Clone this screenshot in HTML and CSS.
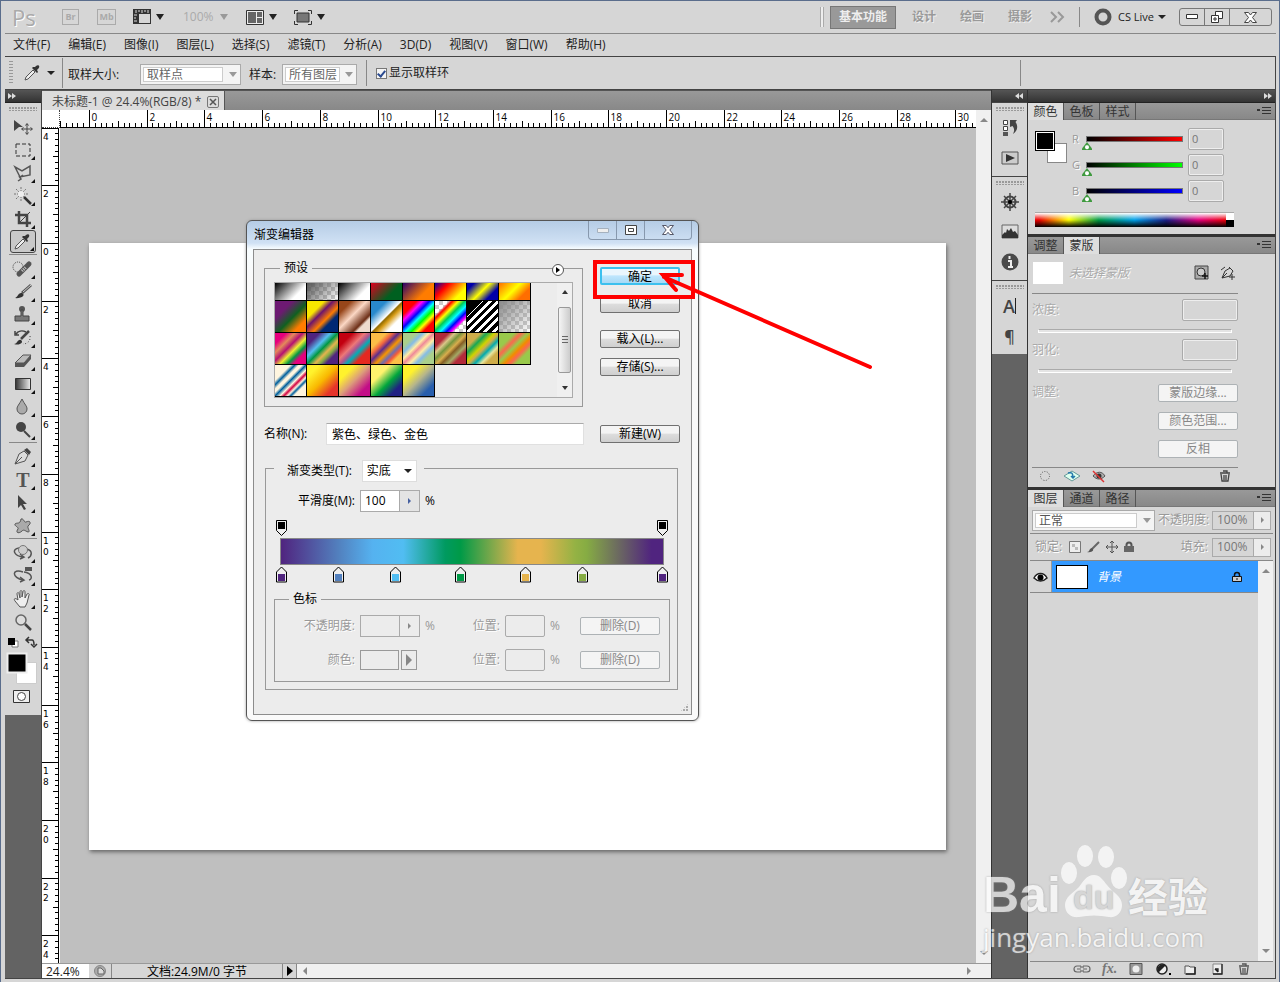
FILE: index.html
```html
<!DOCTYPE html>
<html lang="zh-CN">
<head>
  <meta charset="utf-8">
  <title>未标题-1</title>
  <link rel="stylesheet" href="styles.css">
</head>
<body>
  <div class="window">
    <header class="app-bar">
      <span class="ps-logo">Ps</span>
      <span class="mini-app br">Br</span>
      <span class="mini-app mb">Mb</span>
      <svg class="view-icon" width="18" height="16" viewBox="0 0 18 16"><path d="M0 0h18v15H0z" fill="#333"/><path d="M6 5h11v9H6z" fill="#d6d6d6"/><path d="M3 1v3M6 1v2M9 1v3M12 1v2M15 1v3M1 6h3M1 9h2M1 12h3" stroke="#ddd"/></svg>
      <i class="caret"></i>
      <span class="zoom-value">100%</span>
      <i class="caret pale"></i>
      <svg class="arrange-icon" width="18" height="15" viewBox="0 0 18 15"><path d="M.5.5h17v14H.5z" fill="#eee" stroke="#333"/><path d="M2 2h8v11H2zM11 2h5v5h-5zM11 8h5v5h-5z" fill="#666"/></svg>
      <i class="caret"></i>
      <svg class="screen-icon" width="18" height="15" viewBox="0 0 18 15"><path d="M.5 4V.5H4M14 .5h3.500V4M17.500 11v3.500H14M4 14.500H.5V11" fill="none" stroke="#333"/><path d="M3 3h12v9H3z" fill="#777" stroke="#333"/></svg>
      <i class="caret"></i>
      <div class="workspaces">
        <i class="double-line"></i>
        <button class="workspace active">基本功能</button>
        <button class="workspace">设计</button>
        <button class="workspace">绘画</button>
        <button class="workspace">摄影</button>
        <svg class="more" width="16" height="12" viewBox="0 0 16 12"><path d="M1 1l5 5-5 5M8 1l5 5-5 5" fill="none" stroke="#999" stroke-width="2"/></svg>
        <i class="divider"></i>
        <svg class="cs-ring" width="18" height="18" viewBox="0 0 18 18"><circle cx="9" cy="9" r="6.500" fill="none" stroke="#555" stroke-width="4"/></svg>
        <span class="cs-live">CS Live</span>
        <i class="caret small"></i>
        <div class="win-buttons">
          <button aria-label="最小化"><svg width="12" height="6" viewBox="0 0 12 6"><path d="M.5.5h11v4H.5z" fill="#fff" stroke="#333"/></svg></button>
          <button aria-label="还原"><svg width="12" height="12" viewBox="0 0 12 12"><path d="M4.500.5h7v7h-7z" fill="#fff" stroke="#333"/><path d="M.5 4.500h7v7h-7zM3 7h2v2H3z" fill="#fff" stroke="#333"/></svg></button>
          <button class="wide" aria-label="关闭"><svg width="13" height="11" viewBox="0 0 13 11"><path d="M.5.5h4l2 2.500 2-2.500h4l-4 5 4 5h-4l-2-2.500-2 2.500h-4l4-5z" fill="#fff" stroke="#444"/></svg></button>
        </div>
      </div>
    </header>

    <nav class="menu">
      <a href="#">文件(F)</a><a href="#">编辑(E)</a><a href="#">图像(I)</a><a href="#">图层(L)</a><a href="#">选择(S)</a><a href="#">滤镜(T)</a><a href="#">分析(A)</a><a href="#">3D(D)</a><a href="#">视图(V)</a><a href="#">窗口(W)</a><a href="#">帮助(H)</a>
    </nav>

    <div class="options">
      <i class="grip-v"></i>
      <svg class="dropper" width="18" height="18" viewBox="0 0 18 18"><path d="M2 16l1-3 7-7 2 2-7 7z" fill="#eee" stroke="#555"/><path d="M9 4l5 5 1-1-1-2c4-3 2-6-1-4l-1 1-2 0z" fill="#333"/></svg>
      <i class="caret small"></i>
      <i class="option-line"></i>
      <div class="option-fields">
        <label class="size-label" for="size">取样大小:</label>
        <span class="combo size"><select id="size"><option>取样点</option></select><i class="caret pale"></i></span>
        <label class="sample-label" for="sample">样本:</label>
        <span class="combo sample"><select id="sample"><option>所有图层</option></select><i class="caret pale"></i></span>
      </div>
      <i class="option-line short"></i>
      <input class="ring-check" type="checkbox" id="ring" checked>
      <label for="ring">显示取样环</label>
      <i class="option-line far"></i>
    </div>

    <div class="workspace-area">
      <aside class="tools">
        <div class="dark-head"><svg width="8" height="6" viewBox="0 0 8 6"><path d="M0 0l4 3-4 3zM4 0l4 3-4 3z" fill="#ddd"/></svg></div>
        <div class="tool-box">
          <i class="grip"></i>
          <button class="tool plain" aria-label="移动"><svg viewBox="0 0 22 20"><path d="M2 3l9 7-4 0-5 4z" fill="#444"/><path d="M15 7v10M10 12h10M13.500 8.500l1.500-2 1.500 2M13.500 15.500l1.500 2 1.500-2M11.500 10.500l-2 1.500 2 1.500M18.500 10.500l2 1.500-2 1.500" fill="none" stroke="#444"/></svg></button>
          <button class="tool" aria-label="选框"><svg viewBox="0 0 22 20"><path d="M4 4h14v12H4z" fill="none" stroke="#333" stroke-dasharray="4 2"/></svg></button>
          <button class="tool" aria-label="套索"><svg viewBox="0 0 22 20"><path d="M3 4l7 4 8-5v9l-10 2zM8 14l3-2M7 13l2 3-3 2" fill="none" stroke="#555" stroke-width="1.500"/></svg></button>
          <button class="tool" aria-label="魔棒"><svg viewBox="0 0 22 20"><path d="M9 1v15M2 8h14M4 3l10 10M4 13L14 3" stroke="#777" stroke-dasharray="2 1"/><circle cx="9" cy="8" r="3" fill="#eee"/><path d="M12 11l7 7" stroke="#333" stroke-width="2.500"/></svg></button>
          <button class="tool" aria-label="裁剪"><svg viewBox="0 0 22 20"><path d="M7 2v12h12M3 6h12v12" fill="none" stroke="#444" stroke-width="2.500"/><path d="M7 14L18 3" stroke="#444"/></svg></button>
          <button class="tool selected" aria-label="吸管"><svg viewBox="0 0 22 20"><path d="M3 17l1-3 7-7 2 2-7 7z" fill="#eee" stroke="#555"/><path d="M10 5l5 5 1-1-1-2c4-3 2-6-1-4l-1 1-2 0z" fill="#333"/></svg></button>
          <i class="tool-line"></i>
          <button class="tool" aria-label="修复画笔"><svg viewBox="0 0 22 20"><circle cx="6" cy="8" r="5" fill="none" stroke="#444" stroke-dasharray="1 1"/><path d="M7 15L17 5" stroke="#555" stroke-width="5" stroke-linecap="round"/><path d="M10 12l4-4" stroke="#ccc" stroke-width="3" stroke-dasharray="1 1"/></svg></button>
          <button class="tool" aria-label="画笔"><svg viewBox="0 0 22 20"><path d="M10 11l9-8" stroke="#555" stroke-width="3"/><path d="M11 10l8-7" stroke="#ccc"/><path d="M2 16c4 0 4-6 8-5 4 2 0 6-8 5z" fill="#333"/></svg></button>
          <button class="tool" aria-label="图章"><svg viewBox="0 0 22 20"><circle cx="10" cy="4" r="3" fill="#555"/><path d="M9 5h2v6h6v5H3v-5h6z" fill="#777" stroke="#444"/></svg></button>
          <button class="tool" aria-label="历史画笔"><svg viewBox="0 0 22 20"><path d="M4 6c2-3 6-4 10-2M3 3v4h4" fill="none" stroke="#444" stroke-width="1.500"/><path d="M9 11l8-8" stroke="#444" stroke-width="2.500"/><path d="M2 16c4 0 3-5 7-4 3 2-1 6-7 4z" fill="#333"/><path d="M18 8c1 5-3 8-7 8" fill="none" stroke="#444" stroke-dasharray="1 2"/></svg></button>
          <button class="tool" aria-label="橡皮擦"><svg viewBox="0 0 22 20"><path d="M3 12l8-8h8l-7 8z" fill="#bbb" stroke="#555"/><path d="M3 12h9v4H3zM12 12l7-8v4l-7 8z" fill="#555"/></svg></button>
          <button class="tool" aria-label="渐变"><svg viewBox="0 0 22 20"><defs><linearGradient id="tg"><stop stop-color="#333"/><stop offset="1" stop-color="#eee"/></linearGradient></defs><path d="M3.500 4.500h15v11h-15z" fill="url(#tg)" stroke="#333"/></svg></button>
          <button class="tool" aria-label="模糊"><svg viewBox="0 0 22 20"><path d="M10 2c3 6 5 7 5 10a5 5 0 0 1-10 0c0-3 2-4 5-10z" fill="#aaa" stroke="#555"/></svg></button>
          <button class="tool" aria-label="减淡"><svg viewBox="0 0 22 20"><circle cx="9" cy="7" r="5" fill="#444"/><path d="M12 11l6 6" stroke="#444" stroke-width="2"/></svg></button>
          <i class="tool-line"></i>
          <button class="tool" aria-label="钢笔"><svg viewBox="0 0 22 20"><path d="M3 17l4-10 5-3 4 4-3 6zM3 17l7-7" fill="#ddd" stroke="#555"/><path d="M12 3l3-2 4 4-2 3z" fill="#444"/></svg></button>
          <button class="tool type" aria-label="文字">T</button>
          <button class="tool" aria-label="路径选择"><svg viewBox="0 0 22 20"><path d="M6 2l9 9-4 0 3 5-2 1-3-5-3 3z" fill="#444"/></svg></button>
          <button class="tool" aria-label="形状"><svg viewBox="0 0 22 20"><path d="M9 3c3-1 3 4 5 3 4-2 6 1 2 4-1 2 3 6 0 6-3-1-4-3-6-1-3 3-7 2-4-2 1-2-4-3-3-5 2-2 5 1 6-5z" fill="#aaa" stroke="#555"/></svg></button>
          <i class="tool-line"></i>
          <button class="tool" aria-label="3D旋转"><svg viewBox="0 0 22 20"><path d="M7 5C-1 6 2 13 11 14M15 6c6 2 5 7 1 9M8 11l4 3-4 2" fill="none" stroke="#555" stroke-width="1.500"/><circle cx="11" cy="7" r="4.500" fill="#ccc" stroke="#777"/></svg></button>
          <button class="tool" aria-label="3D相机"><svg viewBox="0 0 22 20"><path d="M11 6C-1 2 0 12 11 14M12 6c8 1 9 7 5 8M8 11l4 3-4 2" fill="none" stroke="#555" stroke-width="1.500"/><path d="M13 1h7v4h-7z" fill="#555"/></svg></button>
          <button class="tool" aria-label="抓手"><svg viewBox="0 0 22 20"><path d="M8 18l-5-6c-2-3 1-3 3-1L5 5c0-2 2-2 2 0l1 4V3c0-2 2-2 2 0v5l1-5c0-2 2-2 2 0v6l2-4c1-1 3 0 2 1l-2 8-2 4z" fill="#eee" stroke="#555"/></svg></button>
          <button class="tool plain" aria-label="缩放"><svg viewBox="0 0 22 20"><circle cx="9" cy="8" r="5" fill="#ddd" stroke="#666" stroke-width="1.500"/><path d="M13 12l6 6" stroke="#444" stroke-width="2.500"/></svg></button>
          <svg class="tool-swatches" width="34" height="72" viewBox="0 0 34 72"><path d="M7 6h6v6H7z" fill="#fff" stroke="#777"/><path d="M3 3h7v7H3z"/><path d="M22 5h5c2 0 2 2 2 5M24 2l-3 3 3 3M26 9l3 3 3-3" fill="none" stroke="#333" stroke-width="1.500"/><path d="M11.500 27.500h20v21h-20z" fill="#fff" stroke="#ccc"/><path d="M2.500 18.500h19v19h-19z" fill="#000" stroke="#eee" stroke-width="2"/><path d="M8.500 55.500h16v12h-16z" fill="#eee" stroke="#333"/><circle cx="16.500" cy="61.500" r="4" fill="#fff" stroke="#444"/></svg>
        </div>
      </aside>

      <main class="document">
        <div class="doc-tabs"><div class="doc-tab">未标题-1 @ 24.4%(RGB/8) * <button aria-label="关闭标签"><svg width="10" height="10" viewBox="0 0 10 10"><path d="M2 2l6 6M8 2L2 8" stroke="#555" stroke-width="1.500"/></svg></button></div></div>
        <div class="doc-body">
          <div class="ruler-corner"></div>
          <svg class="ruler-top" id="ruler-top"></svg>
          <div class="scroll-v doc-scroll"><i class="up"></i><i class="down"></i></div>
          <svg class="ruler-left" id="ruler-left"></svg>
          <div class="canvas">
            <div class="page"></div>

            <section class="dialog">
              <div class="dialog-title">
                <h1>渐变编辑器</h1>
                <div class="dialog-buttons">
                  <button aria-label="最小化"><svg width="12" height="5" viewBox="0 0 12 5"><path d="M.5.5h11v4H.5z" fill="#eee" stroke="#a5b1be"/></svg></button>
                  <button aria-label="最大化"><svg width="12" height="10" viewBox="0 0 12 10"><path d="M.5.5h11v9H.5zM3.500 3.500h5v3h-5z" fill="#fff" stroke="#444"/></svg></button>
                  <button class="wide" aria-label="关闭"><svg width="12" height="10" viewBox="0 0 13 11"><path d="M.5.5h4l2 2.500 2-2.500h4l-4 5 4 5h-4l-2-2.500-2 2.500h-4l4-5z" fill="#fff" stroke="#445"/></svg></button>
                </div>
              </div>
              <form class="client">
                <div class="preset-row">
                  <fieldset class="presets">
                    <legend>预设</legend>
                    <button type="button" class="flyout" aria-label="菜单"></button>
                    <div class="preset-list">
                      <div class="swatches">
                        <i class="g1"></i><i class="g2"></i><i class="g1"></i><i class="g4"></i><i class="g5"></i><i class="g6"></i><i class="g7"></i><i class="g8"></i>
                        <i class="g9"></i><i class="g10"></i><i class="g11"></i><i class="g12"></i><i class="g13"></i><i class="g14"></i><i class="g15"></i><i class="g16"></i>
                        <i class="g17"></i><i class="g18"></i><i class="g19"></i><i class="g20"></i><i class="g21"></i><i class="g22"></i><i class="g23"></i><i class="g24"></i>
                        <i class="g25"></i><i class="g26"></i><i class="g27"></i><i class="g28"></i><i class="g29"></i>
                      </div>
                      <div class="scroll-v list-scroll"><i class="up"></i><b></b><i class="down"></i></div>
                    </div>
                  </fieldset>
                  <div class="dialog-actions">
                    <button type="button" class="btn default">确定</button>
                    <button type="button" class="btn">取消</button>
                    <button type="button" class="btn load">载入(L)...</button>
                    <button type="button" class="btn">存储(S)...</button>
                  </div>
                </div>
                <div class="name-row">
                  <label for="name">名称(N):</label>
                  <input id="name" type="text" value="紫色、绿色、金色">
                  <button type="button" class="btn">新建(W)</button>
                </div>
                <fieldset class="gradient-type">
                  <legend><label for="type">渐变类型(T):</label><span class="type-select"><select id="type"><option>实底</option></select><i class="caret small"></i></span></legend>
                  <div class="smooth-row">
                    <label for="smooth">平滑度(M):</label>
                    <span class="spin"><input id="smooth" type="text" value="100"><button type="button" aria-label="调整平滑度"></button></span>
                    <span>%</span>
                  </div>
                  <div class="stops top" id="opacity-stops"></div>
                  <div class="gradient-bar"></div>
                  <div class="stops" id="color-stops"></div>
                  <fieldset class="stop-edit">
                    <legend>色标</legend>
                    <div class="stop-row">
                      <label for="stop-opacity">不透明度:</label>
                      <span class="spin"><input id="stop-opacity" type="text" disabled><button type="button" disabled aria-label="调整不透明度"></button></span>
                      <span>%</span>
                      <label for="pos1">位置:</label>
                      <input class="pos" id="pos1" type="text" disabled>
                      <span>%</span>
                      <button type="button" class="btn" disabled>删除(D)</button>
                    </div>
                    <div class="stop-row">
                      <label for="stop-color">颜色:</label>
                      <span class="color-pick"><button type="button" id="stop-color" disabled></button><button type="button" class="arrow" disabled aria-label="选择颜色"></button></span>
                      <span></span>
                      <label for="pos2">位置:</label>
                      <input class="pos" id="pos2" type="text" disabled>
                      <span>%</span>
                      <button type="button" class="btn" disabled>删除(D)</button>
                    </div>
                  </fieldset>
                </fieldset>
                <i class="resize"></i>
              </form>
            </section>
          </div>
        </div>
        <footer class="status">
          <input class="status-zoom" type="text" value="24.4%" aria-label="缩放">
          <span class="status-icon"><svg width="12" height="12" viewBox="0 0 12 12"><circle cx="6" cy="6" r="5.500" fill="#aaa" stroke="#888"/><path d="M4 3h3l3 3v3H4z" fill="#ddd" stroke="#666"/></svg></span>
          <span class="status-doc">文档:24.9M/0 字节</span>
          <button class="status-arrow" aria-label="状态菜单"></button>
          <span class="scroll-h"><i class="to-left"></i><i class="to-right"></i></span>
        </footer>
      </main>

      <aside class="dock">
        <div class="dark-head"><svg width="8" height="6" viewBox="0 0 8 6"><path d="M4 0L0 3l4 3zM8 0L4 3l4 3z" fill="#ddd"/></svg></div>
        <div class="dock-group"><i class="grip"></i>
          <button aria-label="历史记录"><svg viewBox="0 0 20 20"><path d="M3.500 2.500h4v4h-4zM3.500 8.500h4v4h-4z" fill="#fff" stroke="#444"/><path d="M3 14h5v4H3z" fill="#555"/><path d="M10 2h7l-1.500 2c3 4 2 9-2.500 12 2-4 1-6-.5-8L10 9z" fill="#444"/></svg></button>
          <button aria-label="动作"><svg viewBox="0 0 20 20"><path d="M2 4h16v12H2z" fill="#ccc" stroke="#555"/><path d="M6 6l9 4-9 4z" fill="#333"/></svg></button></div>
        <div class="dock-group"><i class="grip"></i>
          <button aria-label="导航器"><svg viewBox="0 0 20 20"><circle cx="10" cy="10" r="5.500" fill="none" stroke="#444" stroke-width="2"/><path d="M10 1v18M1 10h18M4 4l12 12M4 16L16 4" stroke="#444" stroke-width="1.500"/><circle cx="10" cy="10" r="2"/></svg></button>
          <button aria-label="直方图"><svg viewBox="0 0 20 20"><path d="M2 3h16v13H2z" fill="#ddd" stroke="#666"/><path d="M2 16v-3l3-3 1 1 1-4 2 2 2-3 2 4 2-1 3 4v3z" fill="#333"/></svg></button>
          <button aria-label="信息"><svg viewBox="0 0 20 20"><circle cx="10" cy="10" r="8.500" fill="#4a4a4a"/><path d="M8 9h3v6h2M8 15h5M9.500 4v3" fill="none" stroke="#eee" stroke-width="2"/></svg></button></div>
        <div class="dock-group"><i class="grip"></i>
          <button class="char" aria-label="字符"><span>A</span></button>
          <button class="char para" aria-label="段落">¶</button></div>
      </aside>

      <aside class="panels">
        <div class="dark-head at-end"><svg width="8" height="6" viewBox="0 0 8 6"><path d="M0 0l4 3-4 3zM4 0l4 3-4 3z" fill="#ddd"/></svg></div>
        <section class="panel color-panel">
          <div class="tabs"><button class="active">颜色</button><button>色板</button><button>样式</button><i class="panel-menu"></i></div>
          <div class="color-body">
            <div class="fg-bg"><i class="bg"></i><i class="fg"></i></div>
            <div class="channels">
              <div class="channel red"><label for="r">R</label><input id="r" type="range" min="0" max="255" value="0"><input type="text" value="0" aria-label="R 值"></div>
              <div class="channel green"><label for="g">G</label><input id="g" type="range" min="0" max="255" value="0"><input type="text" value="0" aria-label="G 值"></div>
              <div class="channel blue"><label for="b">B</label><input id="b" type="range" min="0" max="255" value="0"><input type="text" value="0" aria-label="B 值"></div>
            </div>
            <div class="spectrum"><i></i></div>
          </div>
        </section>
        <section class="panel mask-panel">
          <div class="tabs"><button>调整</button><button class="active">蒙版</button><i class="panel-menu"></i></div>
          <div class="mask-body">
            <div class="mask-head"><i class="mask-thumb"></i><em>未选择蒙版</em>
              <svg width="16" height="16" viewBox="0 0 16 16"><path d="M1 1h13v13H1z" fill="#aaa" stroke="#444"/><circle cx="7" cy="7" r="4" fill="#ccc" stroke="#333"/><path d="M8 11h6M11 8v6" stroke="#111" stroke-width="1.500"/></svg>
              <svg width="16" height="16" viewBox="0 0 16 16"><path d="M2 13l3-7 5-3 3 3-3 5zM2 13l5-5M1 5l4-3M9 2l4 4M9 12h6M12 9v6" fill="none" stroke="#333"/></svg></div>
            <div class="mask-field"><label for="density">浓度:</label><input id="density" type="text" disabled></div>
            <i class="mask-track"></i>
            <div class="mask-field"><label for="feather">羽化:</label><input id="feather" type="text" disabled></div>
            <i class="mask-track"></i>
            <div class="refine"><span>调整:</span><div><button class="btn" disabled>蒙版边缘...</button><button class="btn" disabled>颜色范围...</button><button class="btn" disabled>反相</button></div></div>
            <div class="mask-foot">
              <svg width="16" height="14" viewBox="0 0 16 14"><circle cx="8" cy="7" r="4.500" fill="none" stroke="#555" stroke-dasharray="1 1.500"/></svg>
              <svg width="18" height="14" viewBox="0 0 18 14"><path d="M1 7l8-5 8 5-8 5z" fill="#dfe" stroke="#699"/><path d="M5 4c4-1 5 0 5 5M8 7l2 2 2-2" fill="none" stroke="#27a" stroke-width="1.500"/></svg>
              <svg width="16" height="14" viewBox="0 0 16 14"><path d="M2 7c4-5 9-5 12 0-4 4-8 4-12 0z" fill="#aaa" stroke="#555"/><circle cx="8" cy="7" r="2.500" fill="#333"/><path d="M2 2l11 11" stroke="#d33" stroke-width="1.500"/></svg>
              <svg class="trash" width="12" height="12" viewBox="0 0 12 12"><path d="M1 3h10M4 1h4v2M2 4l1 7h6l1-7M5 5v5M7 5v5" fill="none" stroke="#444" stroke-width="1.300"/></svg></div>
          </div>
        </section>
        <section class="panel layer-panel">
          <div class="tabs"><button class="active">图层</button><button>通道</button><button>路径</button><i class="panel-menu"></i></div>
          <div class="layer-row blend">
            <span class="combo"><select aria-label="混合模式"><option>正常</option></select><i class="caret pale"></i></span>
            <label for="opacity">不透明度:</label><span class="spin"><input id="opacity" type="text" value="100%" disabled><button disabled aria-label="调整不透明度"></button></span>
          </div>
          <div class="layer-row locks"><span>锁定:</span>
            <svg width="12" height="12" viewBox="0 0 12 12"><path d="M.5.5h11v11H.5z" fill="#eee" stroke="#777"/><path d="M3 3h3v3H3zM6 6h3v3H6z" fill="#bbb"/></svg>
            <svg width="13" height="12" viewBox="0 0 13 12"><path d="M5 8l7-7" stroke="#666" stroke-width="2"/><path d="M0 11c3 0 2-4 5-4 3 2 0 5-5 4z" fill="#555"/></svg>
            <svg width="12" height="12" viewBox="0 0 12 12"><path d="M6 0v12M0 6h12M4 2l2-2 2 2M4 10l2 2 2-2M2 4L0 6l2 2M10 4l2 2-2 2" fill="none" stroke="#555"/></svg>
            <svg width="10" height="12" viewBox="0 0 10 12"><path d="M2.500 6V4a2.500 2.500 0 0 1 5 0v2" fill="none" stroke="#555" stroke-width="2"/><path d="M0 5h10v6H0z" fill="#666"/></svg>
            <label for="fill">填充:</label><span class="spin"><input id="fill" type="text" value="100%" disabled><button disabled aria-label="调整填充"></button></span>
          </div>
          <div class="layers">
            <div class="layer-list">
              <div class="layer">
                <span class="eye"><svg width="15" height="14" viewBox="0 0 15 14"><path d="M1 8c3-6 10-6 13 0-4 4-9 4-13 0z" fill="#fff" stroke="#222" stroke-width="1.500"/><circle cx="7.500" cy="7.500" r="3"/></svg></span>
                <div class="layer-main"><i class="thumb"></i><em>背景</em><svg width="10" height="12" viewBox="0 0 10 12"><path d="M2.500 6V4a2.500 2.500 0 0 1 5 0v2" fill="none" stroke="#111" stroke-width="1.500"/><path d="M.5 5.500h9v5h-9z" fill="#ccc" stroke="#111"/><path d="M5 7v2" stroke="#111"/></svg></div>
              </div>
            </div>
            <div class="scroll-v"><i class="up"></i><i class="down"></i></div>
          </div>
          <div class="layer-foot">
            <svg viewBox="0 0 18 14"><path d="M8 4H4a3 3 0 0 0 0 6h4M10 4h4a3 3 0 0 1 0 6h-4M4 7h4M10 7h4M8 4v2M10 4v2M8 8v2M10 8v2" fill="none" stroke="#666" stroke-width="1.200"/></svg>
            <span class="fx">fx.</span>
            <svg viewBox="0 0 18 14"><path d="M3 1.500h12v11H3z" fill="#999" stroke="#555"/><circle cx="9" cy="7" r="3.500" fill="#eee"/></svg>
            <svg viewBox="0 0 18 14"><circle cx="8" cy="7" r="5" fill="#eee" stroke="#222" stroke-width="1.500"/><path d="M4.500 10.500l7-7a5 5 0 0 0-7 7z" fill="#222"/><path d="M15 11h2v2h-2z"/></svg>
            <svg viewBox="0 0 18 14"><path d="M4 4h4l1 1h5v7H4z" fill="#eee" stroke="#555"/><path d="M14 5v7H5" fill="none" stroke="#222" stroke-width="1.500"/></svg>
            <svg viewBox="0 0 18 14"><path d="M5 2h9v10H5z" fill="#eee" stroke="#888"/><path d="M14 2v10H5M7 7h3v3M10 10L7 7" fill="none" stroke="#222" stroke-width="1.300"/></svg>
            <svg viewBox="0 0 18 14"><path d="M4 4h10M7 2h4v2M5 5l1 7h6l1-7M8 6v5M10 6v5" fill="none" stroke="#555" stroke-width="1.300"/></svg>
          </div>
        </section>
      </aside>
    </div>
  </div>

  <div class="watermark">
    <div class="mark-top"><span class="bai">Bai</span><span class="paw"><svg viewBox="0 0 68 74"><g fill="#fff"><ellipse cx="9" cy="29" rx="8" ry="11"/><ellipse cx="25" cy="12" rx="8" ry="11"/><ellipse cx="46" cy="13" rx="8" ry="11"/><ellipse cx="59" cy="34" rx="8" ry="11"/><path d="M34 31c-8 0-11 7-15 12C13 49 5 53 5 61c0 9 7 13 14 12 10-2 20-2 30 0 7 1 13-4 13-12 0-9-10-13-15-20-4-5-7-10-13-10z"/></g></svg><b>du</b></span><span class="jy">经验</span></div>
    <div class="mark-url">jingyan.baidu.com</div>
  </div>
  <svg class="callout" width="290" height="120" viewBox="0 0 290 120"><path d="M5 4h98v35H5z" fill="none" stroke="#f00" stroke-width="4"/><path d="M280 109L74 19M92 17H73l13 15" fill="none" stroke="#f00" stroke-width="4" stroke-linecap="round"/></svg>
  <script src="script.js"></script>
</body>
</html>
```
FILE: styles.css
```css
* { box-sizing: border-box; }

body {
  margin: 0;
  background: #d6d6d6;
  font: 12px/16px "Open Sans", "Noto Sans CJK SC", sans-serif;
  color: #222;
}
button, input, select {
  font: inherit;
  color: inherit;
  margin: 0;
  padding: 0;
  border: 0;
  border-radius: 0;
  background: none;
  appearance: none;
  min-width: 0;
}
i { display: block; flex: none; }
svg { display: block; flex: none; }
label, span { white-space: nowrap; }

.window {
  display: flex;
  flex-direction: column;
  height: 100vh;
  padding: 0 3px 3px 4px;
  border: 1px solid #5a6d8c;
  border-bottom: 0;
}

.caret {
  width: 0;
  border: 4px solid transparent;
  border-top: 6px solid #222;
  border-bottom: 0;
}
.caret.pale { border-top-color: #999; }
.caret.small { border-width: 4px 4px 0; }

/* application bar */
.app-bar {
  display: flex;
  align-items: center;
  height: 33px;
  padding-left: 7px;
  border-bottom: 1px solid #888;
}
.ps-logo { width: 50px; font-size: 22px; color: #aaa; text-shadow: 1px 1px #fff; }
.mini-app { width: 17px; height: 16px; border: 1px solid #aaa; font: bold 9px/14px "Open Sans", sans-serif; color: #aaa; text-align: center; }
.mb { margin: 0 17px 0 18px; width: 19px; }
.view-icon + .caret, .arrange-icon + .caret, .screen-icon + .caret { margin-left: 5px; }
.zoom-value { width: 37px; margin-left: 19px; color: #aaa; }
.arrange-icon { margin-left: 18px; }
.screen-icon { margin-left: 17px; }
.workspaces { display: flex; align-items: center; margin-left: auto; margin-right: 4px; }
.double-line { width: 4px; height: 20px; margin-right: 6px; border: solid #aaa; border-width: 0 1px; background: #eee; }
.workspace { width: 48px; font-weight: bold; color: #999; text-shadow: 1px 1px #eee; }
.workspace.active { width: 66px; height: 23px; margin-right: 4px; background: #999; border: 1px solid #777; color: #eee; text-shadow: none; }
.more { margin-left: 6px; }
.divider { width: 1px; height: 20px; margin: 0 14px 0 13px; background: #888; }
.cs-live { width: 38px; margin: 0 2px 0 6px; font-size: 11px; }
.cs-live + .caret { margin-right: 13px; }
.win-buttons { display: flex; height: 18px; border: 1px solid #777; border-radius: 3px; }
.win-buttons button { display: grid; place-items: center; width: 25px; border-right: 1px solid #777; }
.win-buttons .wide { width: 41px; border: 0; }

.menu { display: flex; align-items: center; gap: 18px; height: 22px; padding-left: 8px; }
.menu a { color: #222; text-decoration: none; }

/* tool options */
.options {
  display: flex;
  align-items: center;
  height: 34px;
  border: 1px solid #444;
  border-left: 0;
  padding-left: 4px;
}
.option-fields { display: flex; align-items: center; padding-top: 3px; }
.grip-v { width: 4px; height: 24px; background: repeating-linear-gradient(#999 0 1px, transparent 1px 3px); }
.dropper { margin: 0 6px 0 10px; }
.option-line { width: 1px; height: 30px; margin: 0 5px 0 7px; background: #888; }
.option-line.short { height: 26px; margin: 0 9px; }
.option-line.far { height: 26px; margin-left: auto; margin-right: 254px; }
.size-label { width: 72px; }
.sample-label { width: 33px; margin-left: 8px; }
.combo { display: flex; align-items: center; width: 101px; height: 21px; padding: 2px 3px 2px 2px; border: 1px solid #aaa; background: #f4f4f4; color: #666; }
.combo select { flex: 1; height: 100%; padding-left: 3px; border: 1px solid #ccc; background: #fff; line-height: 14px; }
.combo .caret { margin-left: 6px; border-top-width: 5px; }
.combo.sample { width: 75px; }
.combo.sample .caret { margin-left: 5px; }
.ring-check { width: 11px; height: 11px; margin-right: 2px; border: 1px solid #777; background: #f4f4f4; display: grid; place-items: center; }
.ring-check:checked::before { content: ""; width: 3px; height: 6px; border: solid #2a4a90; border-width: 0 2px 2px 0; transform: rotate(40deg); }

/* work area */
.workspace-area { display: flex; flex: 1; min-height: 0; border: solid #444; border-width: 0 1px 1px 0; }
.dark-head { display: flex; align-items: center; height: 12px; padding-left: 3px; background: linear-gradient(#555, #333); }
.dark-head.at-end { justify-content: flex-end; padding-right: 3px; }
.grip { height: 4px; width: 28px; margin: 0 auto; background: radial-gradient(circle at 1px 1px, #999 1px, transparent 1px) 0 0 / 3px 3px; }
.tools { width: 37px; flex: none; background: #636363; border-right: 1px solid #444; }
.tool-box { padding: 4px 0 8px; background: #d6d6d6; border-top: 1px solid #222; }
.tool-box .grip { margin-bottom: 4px; }
.tool { display: block; position: relative; width: 26px; height: 23px; margin-left: 5px; padding: 1px 2px; }
.tool svg { width: 22px; height: 20px; }
.tool::after { content: ""; position: absolute; right: 1px; bottom: 1px; border: 2px solid; border-color: transparent #111 #111 transparent; }
.tool.plain::after { display: none; }
.tool.selected { border: 1px solid #444; border-radius: 3px; background: #c9c9c9; padding: 0 1px; }
.tool.type { font: bold 20px/20px "Liberation Serif", serif; color: #555; }
.tool-line { height: 1px; margin: 1px 4px 2px; background: #888; }
.tool-swatches { margin-top: 2px; }

.document { display: flex; flex-direction: column; flex: 1; min-width: 0; }
.doc-tabs { height: 20px; border-top: 1px solid #555; background: linear-gradient(#999, #888); }
.doc-tab { display: inline-flex; align-items: center; gap: 3px; height: 19px; padding: 2px 5px 0 10px; background: #dcdcdc; border-right: 1px solid #555; color: #444; white-space: pre; }
.doc-tab button { border: 1px solid #777; border-radius: 2px; }
.doc-body { display: grid; grid-template-columns: 18px 1fr 15px; grid-template-rows: 18px 1fr; flex: 1; min-height: 0; }
.ruler-corner { background: #fff; border: dotted #444; border-width: 0 1px 1px 0; }
.ruler-top, .ruler-left { width: 100%; height: 100%; background: #fff; }
.ruler-top text { font: 10px "Open Sans", sans-serif; fill: #000; }
.ruler-left text { font: 9px "DejaVu Sans", sans-serif; fill: #000; }
.doc-scroll { grid-column: 3; grid-row: 1 / 3; }
.canvas { position: relative; background: #bfbfbf; }
.page { position: absolute; left: 29px; top: 115px; width: 857px; height: 607px; background: #fff; box-shadow: 1px 2px 4px #666; }

.scroll-v { display: flex; flex-direction: column; justify-content: space-between; align-items: center; width: 15px; padding: 8px 0; background: #f0f0f0; }
.up, .down { border: 4px solid transparent; }
.up { border-top: 0; border-bottom-color: #888; }
.down { border-bottom: 0; border-top-color: #888; }

.status { display: flex; height: 15px; border-top: 1px solid #999; line-height: 16px; }
.status-zoom { width: 47px; padding: 2px 0 0 4px; background: #fff; }
.status-icon { display: grid; place-items: center; width: 23px; border-right: 1px solid #888; }
.status-doc { width: 171px; text-align: center; color: #000; border-right: 1px solid #888; }
.status-arrow { width: 14px; border-right: 1px solid #888; }
.status-arrow::before { content: ""; display: block; margin-left: 4px; width: 0; border: solid transparent; border-width: 5px 0 5px 6px; border-left-color: #000; }
.scroll-h { display: flex; flex: 1; align-items: center; justify-content: space-between; padding: 0 20px 0 6px; background: #f0f0f0; }
.to-left, .to-right { border: 4px solid transparent; }
.to-left { border-left: 0; border-right-color: #888; }
.to-right { border-right: 0; border-left-color: #888; }

/* gradient editor */
.dialog {
  position: absolute;
  left: 186px;
  top: 92px;
  width: 453px;
  padding: 0 6px 5px;
  border: 1px solid #555;
  border-radius: 6px;
  background: linear-gradient(#b5cce5, #d0e1f4 22px, #f8fdff 28px, #fafafa 60px);
  box-shadow: 0 0 3px #999;
  color: #000;
}
.dialog-title { display: flex; justify-content: space-between; height: 28px; }
.dialog-title h1 { margin: 6px 0 0 1px; font-size: 12px; line-height: 16px; font-weight: normal; }
.dialog-buttons { display: flex; height: 19px; border: 1px solid #8798ad; border-top: 0; border-radius: 0 0 4px 4px; }
.dialog-buttons button { display: grid; place-items: center; width: 28px; border-right: 1px solid #8798ad; }
.dialog-buttons .wide { width: 46px; border: 0; }
.client { position: relative; padding: 10px 11px 24px 10px; border: 1px solid #8c8c8c; background: #ececec; }
fieldset { margin: 0; padding: 0; border: 1px solid #999; min-width: 0; }
legend { padding: 0 4px; }
.preset-row { display: flex; }
.presets { position: relative; flex: none; width: 319px; padding: 6px 9px 8px; }
.presets legend { margin-left: 6px; }
.flyout { position: absolute; right: 18px; top: -12px; width: 12px; height: 12px; border: 1px solid #555; border-radius: 6px; background: #fff; }
.flyout::before { content: ""; display: block; width: 0; margin: auto; border: solid transparent; border-width: 3px 0 3px 4px; border-left-color: #000; }
.preset-list { display: flex; justify-content: space-between; height: 116px; border: 1px solid #aaa; }
.swatches { display: grid; grid-template-columns: repeat(8, 32px); grid-template-rows: 18px 32px 32px 32px; }
.swatches i { border: solid #000; border-width: 0 1px 1px 0; }
.list-scroll { padding: 7px 0; }
.list-scroll .up, .list-scroll .down { border-left-width: 3px; border-right-width: 3px; }
.list-scroll .up { border-bottom-color: #333; }
.list-scroll .down { border-top-color: #333; }
.list-scroll b { width: 13px; height: 66px; border: 1px solid #999; border-radius: 2px; background: linear-gradient(90deg, #f5f5f5, #ccc); display: grid; place-items: center; }
.list-scroll b::before { content: ""; width: 6px; height: 8px; background: repeating-linear-gradient(#666 0 1px, transparent 1px 3px); }
.dialog-actions { display: flex; flex-direction: column; gap: 10px; margin: 7px 0 0 17px; }
.btn { display: block; width: 80px; height: 18px; border: 1px solid #707070; border-radius: 2px; background: linear-gradient(#f4f4f4 45%, #ddd 50%, #cfcfcf); line-height: 16px; text-align: center; }
.btn.default { border: 2px solid #3cc0ee; background: linear-gradient(#eaf6fd 40%, #bee6fd 50%, #a7d9f5); line-height: 16px; }
.btn.load { margin-top: 7px; }
.btn:disabled { border-color: #adb2b5; background: #f4f4f4; color: #888; }
.name-row { display: flex; align-items: center; margin-top: 16px; }
.name-row label { width: 62px; }
.name-row input { width: 258px; height: 22px; padding-left: 5px; border: 1px solid #e0e0e0; border-top-color: #aaa; background: #fff; }
.name-row .btn { margin-left: 16px; }
.gradient-type { margin: 10px 2px 0 1px; padding: 8px 7px 7px 8px; }
.gradient-type > legend { display: flex; align-items: center; margin-left: 0; padding: 5px 7px 0 13px; }
.type-select { display: flex; align-items: center; width: 55px; height: 22px; margin-left: 10px; padding-right: 4px; border: 1px solid #ddd; background: #fff; }
.type-select select { flex: 1; padding-left: 4px; }
.smooth-row { display: flex; align-items: center; gap: 5px; }
.smooth-row label { width: 81px; text-align: right; }
.spin { display: flex; width: 60px; height: 22px; border: 1px solid #aaa; background: #fff; }
.spin input { flex: 1; width: 0; padding-left: 4px; }
.spin button { width: 20px; border-left: 1px solid #aaa; background: #e4e4e4; }
.spin button::before { content: ""; display: block; width: 0; margin: auto; border: solid transparent; border-width: 3px 0 3px 3px; border-left-color: #4660a0; }
.spin button:disabled { background: #ececec; }
.spin button:disabled::before { border-left-color: #888; }
.spin:has(:disabled) { background: #ececec; }
.stops { position: relative; height: 17px; margin: 1px 8px 0 7px; }
.stops.top { margin-top: 8px; }
.stops svg { position: absolute; top: 0; margin-left: -5px; }
.gradient-bar { height: 27px; margin: 1px 6px 0 6px; border: 1px solid #888; background: linear-gradient(90deg, #50247f, #5280be 15%, #55b2f0 24%, #51bdf2 32%, #009a60 43%, #009a47 47%, #e6b44e 62%, #e6b44e 68%, #94b244 77%, #86ac43 80%, #50247f 97%); }
.stop-edit { margin-top: 8px; padding: 8px 8px 10px 0; }
.stop-edit legend { margin-left: 14px; }
.stop-row { display: grid; grid-template-columns: 80px 60px 42px 28px 40px 25px 80px; column-gap: 5px; align-items: center; height: 22px; color: #999; }
.stop-row + .stop-row { margin-top: 12px; }
.stop-row label { text-align: right; text-shadow: 1px 1px #fff; }
.pos { width: 40px; height: 22px; border: 1px solid #aaa; border-radius: 2px; }
.color-pick { display: flex; gap: 2px; }
.color-pick button { width: 39px; height: 20px; border: 1px solid #999; }
.color-pick .arrow { width: 16px; }
.arrow::before { content: ""; display: block; width: 0; margin: auto; border: solid transparent; border-width: 6px 0 6px 6px; border-left-color: #888; }
.resize { position: absolute; right: 2px; bottom: 2px; width: 9px; height: 9px; background: radial-gradient(circle at 1px 1px, #aaa 1px, transparent 1px) 0 0 / 3px 3px; clip-path: polygon(100% 0, 100% 100%, 0 100%); }

/* preset swatches */
.g1 { background: linear-gradient(135deg, #000, #fff 70%); }
.g2 { background: linear-gradient(135deg, #555, transparent), repeating-conic-gradient(#ccc 0 25%, #fff 0 50%) 0 0 / 8px 8px; }
.g4 { background: linear-gradient(135deg, #e00020, #006020 65%); }
.g5 { background: linear-gradient(135deg, #29006a, #ff7c00 65%); }
.g6 { background: linear-gradient(135deg, #00a, red 30%, #ff0 75%); }
.g7 { background: linear-gradient(135deg, #00a 15%, #ff0 48%, #00a 75%); }
.g8 { background: linear-gradient(135deg, #ff6e00, #ff0 45%, #ff6e00 75%); }
.g9 { background: linear-gradient(135deg, #6d1a72 28%, #106020 55%, #ff7c00 80%); }
.g10 { background: linear-gradient(135deg, #f9e600 28%, #6f156c 42%, #fd7c00 60%, #002874 72%); }
.g11 { background: linear-gradient(135deg, #97461a 20%, #fbd8c5 45%, #6c2e16 72%, #efdbcd 78%); }
.g12 { background: linear-gradient(135deg, #2989cc 25%, #fff 49%, #906a00 52%, #d99f1c 60%, #fff 75%); }
.g13 { background: linear-gradient(135deg, red 22%, #f0f 32%, #00f 43%, #0ff 53%, #0f0 63%, #ff0 72%, red 82%); }
.g14 { background: linear-gradient(135deg, transparent 22%, red 28%, #ff0 38%, #0c5 48%, #0ff 58%, #00f 68%, #f0f 76%, transparent 80%), repeating-conic-gradient(#ccc 0 25%, #fff 0 50%) 0 0 / 8px 8px; }
.g15 { background: linear-gradient(135deg, #000 25%, transparent 25%), repeating-linear-gradient(135deg, #000 0 3px, #fff 3px 6px); }
.g16 { background: linear-gradient(135deg, #888, transparent), repeating-conic-gradient(#ccc 0 25%, #fff 0 50%) 0 0 / 8px 8px; }
.g17 { background: linear-gradient(135deg, #e5007d 18%, #e38a5a 32%, #b51272 45%, #ee3 58%, #009844 70%, #e5007d 80%); }
.g18 { background: linear-gradient(135deg, #50247f 20%, #55bef0 38%, #009844 50%, #e7b44f 62%, #86ac43 70%, #50247f 80%); }
.g19 { background: linear-gradient(135deg, #c20010 22%, #ed7777 42%, #aa5692 52%, #00aeb6 62%, #e52820 75%); }
.g20 { background: linear-gradient(135deg, #fbbe47 25%, #f26840 35%, #5d2b8e 45%, #f79600 57%, #716caf 67%, #f45b36 75%, #fbbe47 82%); }
.g21 { background: linear-gradient(135deg, #aacf8b 22%, #85bce5 32%, #ffeda5 42%, #ef8a99 50%, #ffeda5 60%, #85bce5 70%, #aacf8b 80%); }
.g22 { background: linear-gradient(135deg, #b22a3a 22%, #dac688 32%, #76953e 42%, #d8ad4d 52%, #855e24 60%, #a3a966 70%, #b22a3a 80%); }
.g23 { background: linear-gradient(135deg, #cfad4a 22%, #19a753 32%, #ced300 45%, #cfad4a 52%, #00aaae 62%, #e8e6a0 72%, #cfad4a 80%); }
.g24 { background: linear-gradient(135deg, #99c94b 25%, #fa684e 36%, #99c94b 47%, #f28c00 58%, #fa684e 67%, #99c94b 77%); }
.g25 { background: linear-gradient(135deg, #fff5df 25%, #005f9c 32%, #fff5df 39%, #fff5df 44%, #005f9c 50%, #fff5df 58%, #d2003f 64%, #fff5df 70%, #005f9c 75%, #fff5df 80%); }
.g26 { background: linear-gradient(135deg, #fff22d 20%, #f9b800 50%, #e6342b 80%); }
.g27 { background: linear-gradient(135deg, #fff22d 25%, #dc9d7a 50%, #c30d87 80%); }
.g28 { background: linear-gradient(135deg, #fff36d 30%, #00a63c 57%, #202083 80%); }
.g29 { background: linear-gradient(135deg, #fff22d 25%, #b6b58b 50%, #285eac 80%); }

/* collapsed icon dock */
.dock { width: 37px; flex: none; border: solid #333; border-width: 0 1px; background: #636363; }
.dock .dark-head { justify-content: flex-end; padding-right: 4px; }
.dock-group { padding: 4px 0; height: 74px; background: #d6d6d6; border-top: 1px solid #444; }
.dock-group:nth-child(3) { height: 104px; }
.dock-group .grip { margin-bottom: 2px; }
.dock-group button { display: grid; place-items: center; width: 35px; height: 30px; }
.dock-group svg { width: 20px; height: 20px; }
.dock-group .char { font: 600 18px/30px "Open Sans", sans-serif; color: #444; }
.char span { height: 16px; line-height: 16px; border-right: 1px solid #222; }
.dock-group .para { font-size: 16px; }

/* panels */
.panels { display: flex; flex-direction: column; width: 247px; flex: none; background: #d6d6d6; }
.panel { border-top: 1px solid #222; }
.mask-panel, .layer-panel { border-top: 3px solid #333; }
.tabs { display: flex; height: 17px; background: linear-gradient(#999, #888); border-bottom: 1px solid #777; }
.tabs button { width: 36px; height: 17px; border-right: 1px solid #555; color: #333; line-height: 17px; }
.tabs .active { background: #dedede; }
.panel-menu { width: 14px; height: 9px; margin: 4px 4px 0 auto; background: linear-gradient(#333, #333) 0 2px / 3px 2px no-repeat, repeating-linear-gradient(#333 0 1px, transparent 1px 3px) 5px 0 / 9px 9px no-repeat; }
.color-body { display: grid; grid-template-columns: 37px 1fr; height: 114px; padding: 8px 50px 6px 7px; row-gap: 8px; }
.fg-bg { display: grid; grid-template: 12px 20px / 12px 20px; padding-top: 3px; }
.fg { grid-area: 1 / 1; width: 20px; height: 20px; background: #000; border: 2px solid #000; outline: 1px solid #fff; outline-offset: -2px; }
.bg { grid-area: 2 / 2; width: 20px; height: 20px; background: #fff; border: 1px solid #888; }
.channels { display: grid; gap: 4px; align-content: start; }
.channel { display: grid; grid-template-columns: 8px 106px 36px; column-gap: 1px; align-items: center; height: 22px; color: #999; font-size: 11px; text-shadow: 1px 1px #fff; }
.channel [type="text"] { width: 36px; height: 22px; padding: 0 0 2px 3px; border: 1px solid #aaa; border-radius: 2px; box-shadow: inset 0 0 0 1px #eee; color: #777; }
.channel [type="range"] { height: 22px; width: 106px; }
.channel ::-webkit-slider-runnable-track { height: 6px; margin: 0 4px 0 5px; border: 1px solid #777; background: linear-gradient(90deg, #000, var(--end)); }
.channel ::-webkit-slider-thumb { appearance: none; width: 10px; height: 8px; margin: 5px 0 0 -5px; background: radial-gradient(circle at 50% 65%, #fff 20%, #3f9a3f 35%); clip-path: polygon(50% 0, 100% 80%, 100% 100%, 0 100%, 0 80%); }
.red { --end: #f00; }
.green { --end: #0f0; }
.blue { --end: #00f; }
.spectrum { grid-column: 1 / 3; width: 199px; height: 15px; border-top: 1px solid #aaa; background: linear-gradient(#fff, transparent 50%, #000), linear-gradient(90deg, #e00 2%, #ff0 17%, #009944 32%, #00a0e9 50%, #1d2088 66%, #e4007f 82%, #e00 97%); }
.spectrum i { width: 8px; height: 14px; margin-left: auto; background: linear-gradient(#fff 50%, #000 50%); }
.mask-body { height: 233px; padding: 8px 37px 0 4px; color: #aaa; text-shadow: 1px 1px #fff; }
.mask-head { display: flex; align-items: center; height: 32px; padding-bottom: 9px; border-bottom: 1px solid #888; }
.mask-thumb { width: 30px; height: 22px; margin: 0 6px 0 1px; background: #fff; }
.mask-head em { flex: 1; }
.mask-head svg + svg { margin: 0 2px 0 10px; }
.mask-field { display: flex; justify-content: space-between; align-items: center; height: 22px; margin-top: 5px; }
.mask-field input { width: 56px; height: 22px; border: 1px solid #aaa; border-radius: 2px; box-shadow: inset 0 0 0 1px #eee; }
.mask-track { height: 4px; margin: 8px 6px 0; border: 1px solid #fff; border-top-color: #aaa; background: #e4e4e4; }
.mask-track + .mask-field { margin-top: 6px; }
.refine { display: flex; justify-content: space-between; margin-top: 11px; padding: 0 0 9px; border-bottom: 1px solid #888; }
.refine .btn { text-shadow: none; margin-bottom: 10px; }
.refine .btn:last-child { margin-bottom: 0; }
.mask-foot { display: flex; gap: 10px; align-items: center; height: 15px; padding: 0 7px 0 5px; }
.trash { margin-left: auto; }
.layer-panel { display: flex; flex-direction: column; flex: 1; min-height: 0; }
.layer-row { display: flex; align-items: center; height: 27px; margin: 0 2px; padding: 0 2px; border-bottom: 1px solid #888; color: #999; text-shadow: 1px 1px #fff; }
.layer-row .combo { width: 123px; margin-right: 3px; color: #555; text-shadow: none; }
.layer-row .spin { width: 59px; height: 19px; margin-left: auto; background: #d6d6d6; color: #777; text-shadow: none; }
.layer-row .spin button { width: 17px; }
.locks svg { margin-left: 6px; }
.locks span:first-child { margin-left: 3px; margin-right: 1px; }
.locks label { margin-left: auto; }
.locks .spin { margin-left: 4px; }
.layers { display: flex; flex: 1; min-height: 0; margin: 0 2px; border-bottom: 1px solid #888; }
.layer-list { flex: 1; }
.layer { display: flex; height: 32px; border-bottom: 1px solid #888; }
.eye { display: grid; place-items: center; width: 22px; border-right: 1px solid #999; }
.layer-main { display: flex; flex: 1; align-items: center; padding: 0 16px 0 4px; background: #39f; color: #fff; }
.thumb { width: 32px; height: 24px; margin-right: 9px; background: #fff; border: 1px solid #000; }
.layer-main em { flex: 1; }
.layer-foot { display: flex; gap: 9px; height: 16px; padding: 0 0 1px 45px; }
.layer-foot svg { width: 18px; height: 14px; }
.fx { width: 18px; padding-left: 2px; font: italic bold 14px/13px "Liberation Serif", serif; color: #777; }

/* overlays */
.watermark { position: absolute; left: 983px; top: 844px; color: #fff; opacity: .72; text-shadow: 0 0 2px #888; pointer-events: none; }
.mark-top { display: flex; align-items: flex-end; height: 74px; }
.bai { width: 77px; font: bold 50px/50px "Liberation Sans", sans-serif; height: 48px; }
.paw { position: relative; width: 68px; }
.paw svg { width: 68px; height: 74px; }
.paw b { position: absolute; left: 13px; bottom: 4px; font: bold 34px/34px "Liberation Sans", sans-serif; color: #d6d6d6; text-shadow: 0 0 2px #888; }
.jy { font: bold 40px/40px "Noto Sans CJK SC", sans-serif; height: 43px; }
.mark-url { font: 500 26px/38px "Open Sans", sans-serif; }
.callout { position: absolute; left: 590px; top: 258px; pointer-events: none; }
```
FILE: script.js
```js
var NS = 'http://www.w3.org/2000/svg';
var unit = 28.85; // pixels per centimetre at 24.4%

function add(parent, name, attrs, text) {
  var el = document.createElementNS(NS, name);
  for (var key in attrs) el.setAttribute(key, attrs[key]);
  if (text !== undefined) el.textContent = text;
  parent.appendChild(el);
}

function drawRuler(svg, vertical, zero) {
  var length = vertical ? svg.clientHeight : svg.clientWidth;
  var size = 17;
  var d = '';
  for (var n = -25; n < 165; n++) {
    var p = Math.round(zero + n * unit / 5) + 0.5;
    if (p < 0 || p > length) continue;
    var tick = n % 10 === 0 ? 17 : (n % 5 === 0 ? 6 : 4);
    d += vertical ? 'M' + (size - tick) + ' ' + p + 'H' + size : 'M' + p + ' ' + (size - tick) + 'V' + size;
    if (n % 10 === 0) {
      var label = String(Math.abs(n / 5));
      if (vertical) {
        for (var i = 0; i < label.length; i++) add(svg, 'text', { x: 1, y: p + 11 + i * 11 }, label[i]);
      } else {
        add(svg, 'text', { x: p + 2, y: 11 }, label);
      }
    }
  }
  d += vertical ? 'M16.5 0V' + length : 'M0 17.5H' + length;
  add(svg, 'path', { d: d, stroke: '#000', fill: 'none' });
}

drawRuler(document.getElementById('ruler-top'), false, 29);
drawRuler(document.getElementById('ruler-left'), true, 115);

function addStop(id, left, color, flip) {
  var svg = document.createElementNS(NS, 'svg');
  svg.setAttribute('width', 11);
  svg.setAttribute('height', 17);
  svg.style.left = left + '%';
  add(svg, 'path', { d: flip ? 'M.5 .5h10v10l-5 5-5-5z' : 'M.5 6L5.5 1l5 5v10H.5z', fill: '#eee', stroke: '#000' });
  add(svg, 'rect', { x: 2, y: flip ? 2 : 8, width: 7, height: 7, fill: color });
  document.getElementById(id).appendChild(svg);
}

addStop('opacity-stops', 0, '#000', true);
addStop('opacity-stops', 100, '#000', true);
[[0, '#50247f'], [15, '#5280be'], [30, '#51bdf2'], [47, '#009a47'], [64, '#e6b44e'], [79, '#86ac43'], [100, '#50247f']].forEach(function (s) {
  addStop('color-stops', s[0], s[1], false);
});
```
